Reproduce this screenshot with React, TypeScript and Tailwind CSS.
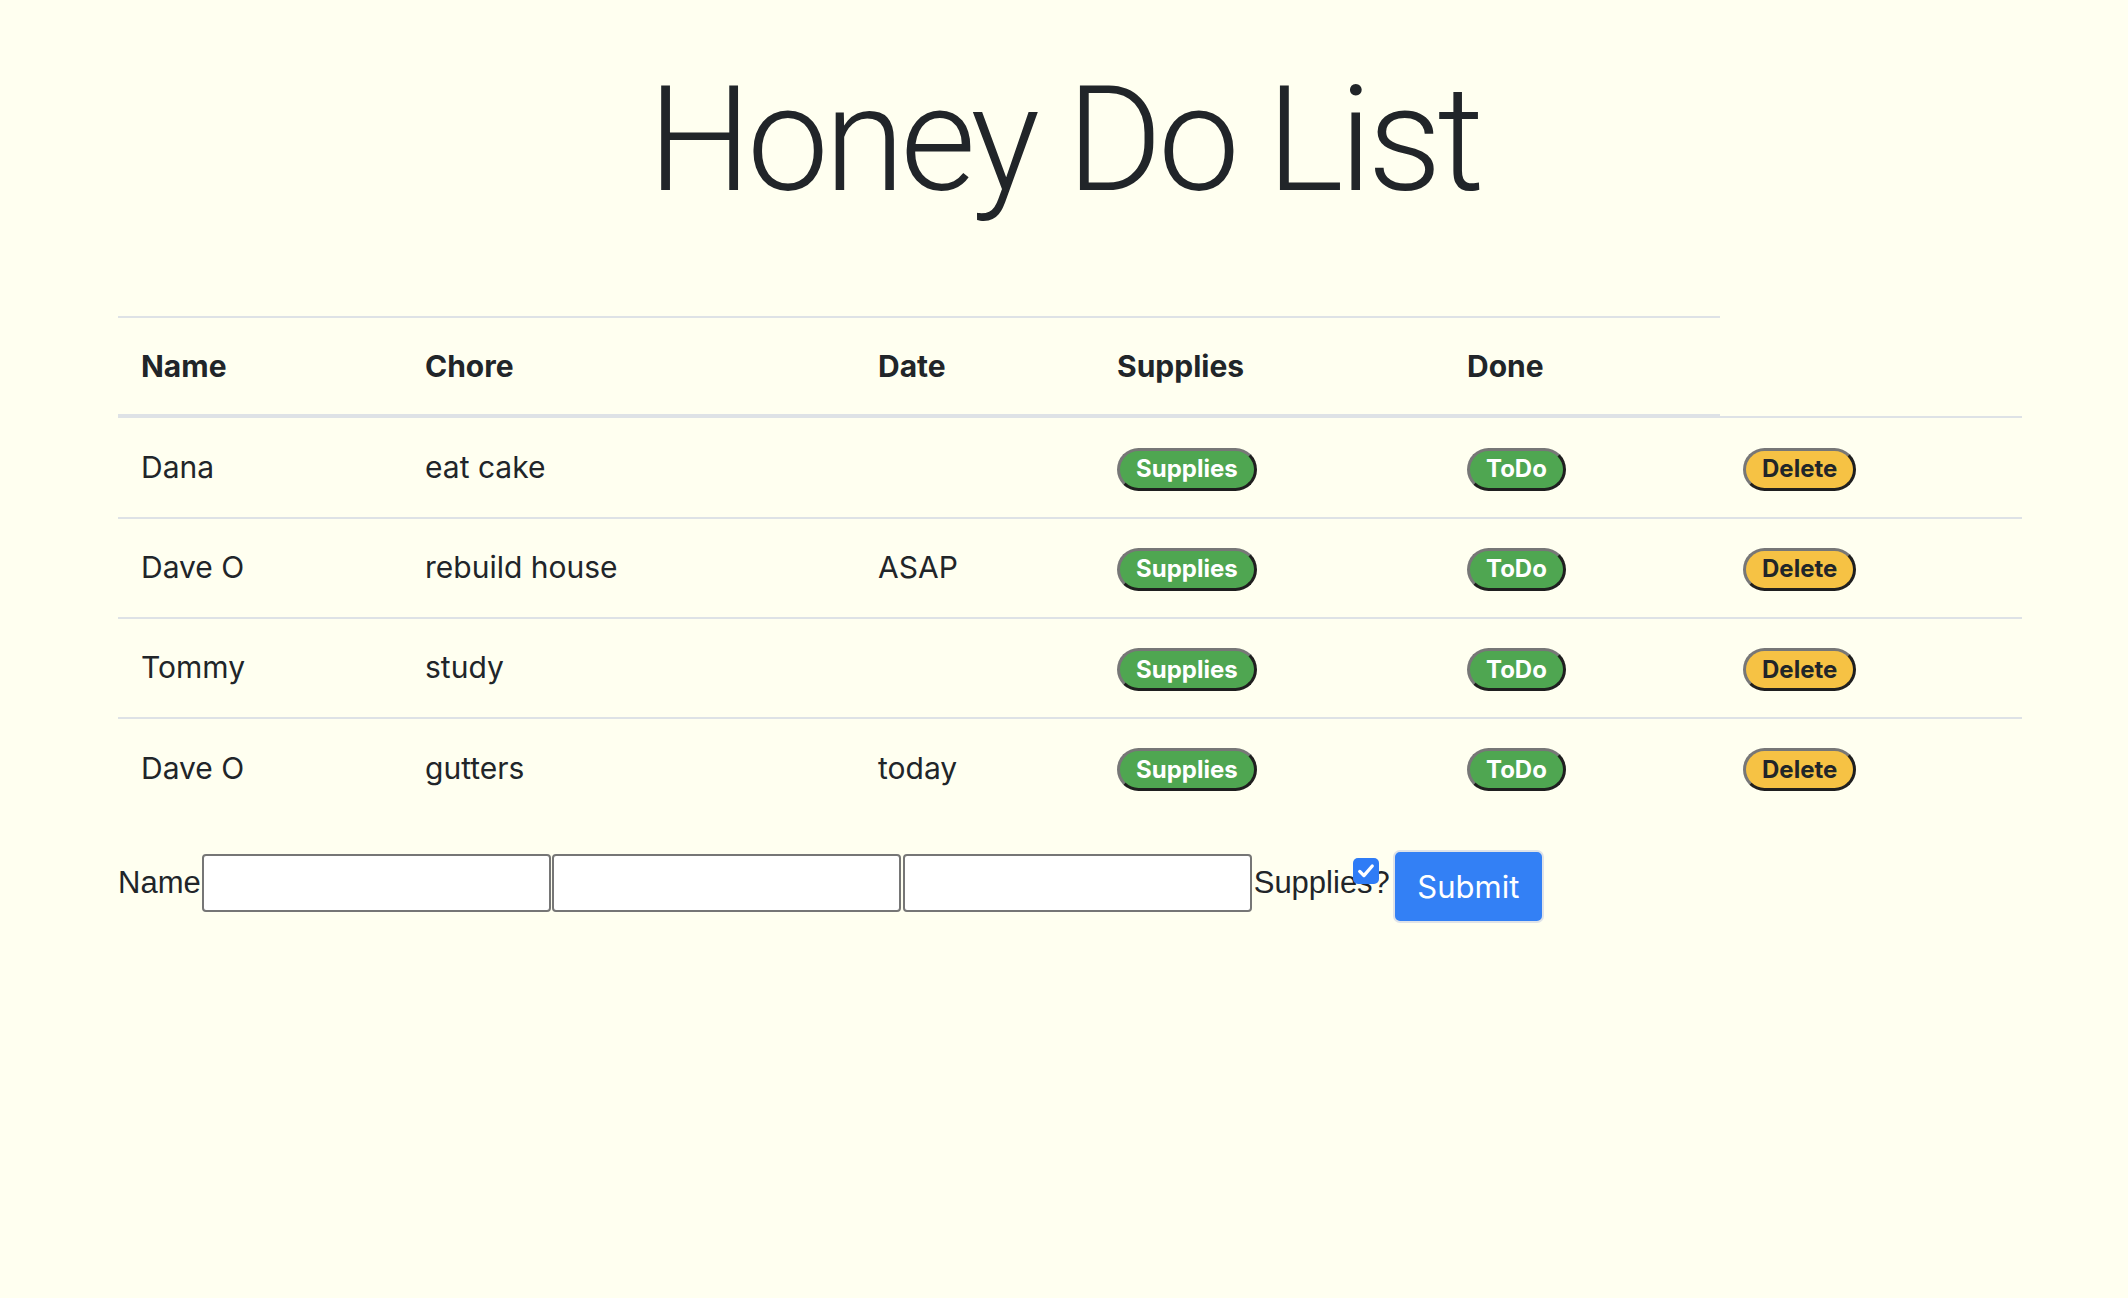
import { useState } from "react";

interface Chore {
  name: string;
  chore: string;
  date: string;
}

const chores: Chore[] = [
  { name: "Dana", chore: "eat cake", date: "" },
  { name: "Dave O", chore: "rebuild house", date: "ASAP" },
  { name: "Tommy", chore: "study", date: "" },
  { name: "Dave O", chore: "gutters", date: "today" },
];

const pill =
  "h-[43px] align-middle rounded-full px-[16px] text-[24px] font-bold leading-none border-[3px] border-t-[#777] border-l-[#777] border-b-[#1f1f1f] border-r-[#1f1f1f]";

const cell = "px-[23px] pt-[26px] pb-[26px] leading-[45px] border-t-2 border-[#dee2e6] align-middle";

export default function App() {
  const [supplies, setSupplies] = useState(true);

  return (
    <div className="min-h-[1298px] bg-[#fffff0] text-[#212529] font-['Inter',sans-serif]">
      <h1 className="pt-[53px] text-center text-[146px] font-light leading-[1.2] tracking-[-0.03em] font-['Roboto',sans-serif]">
        Honey Do List
      </h1>

      <div className="ml-[118px] w-[1904px] mt-[88px]">
        <table className="table-fixed w-full border-separate border-spacing-0 text-[30px]">
          <colgroup>
            <col className="w-[284px]" />
            <col className="w-[453px]" />
            <col className="w-[239px]" />
            <col className="w-[350px]" />
            <col className="w-[276px]" />
            <col className="w-[302px]" />
          </colgroup>
          <thead>
            <tr>
              {["Name", "Chore", "Date", "Supplies", "Done"].map((h) => (
                <th
                  key={h}
                  className="text-left font-bold px-[23px] pt-[26px] pb-[25px] leading-[45px] border-t-2 border-b-2 border-[#dee2e6] align-middle"
                >
                  {h}
                </th>
              ))}
            </tr>
          </thead>
          <tbody>
            {chores.map((c, i) => (
              <tr key={i}>
                <td className={cell}>{c.name}</td>
                <td className={cell}>{c.chore}</td>
                <td className={cell}>{c.date}</td>
                <td className={cell}>
                  <button className={`${pill} bg-[#4fa651] text-white`}>Supplies</button>
                </td>
                <td className={cell}>
                  <button className={`${pill} bg-[#4fa651] text-white`}>ToDo</button>
                </td>
                <td className={cell}>
                  <button className={`${pill} bg-[#f6c244] text-[#212529]`}>Delete</button>
                </td>
              </tr>
            ))}
          </tbody>
        </table>

        {/* Add chore form */}
        <form className="flex items-center mt-[25px] font-['Liberation_Sans',sans-serif] text-[31px]" onSubmit={(e) => e.preventDefault()}>
          <label className="leading-none">Name</label>
          <input className="ml-[1px] w-[349px] h-[58px] bg-white border-2 border-[#767676] rounded-[4px] outline-none" />
          <input className="ml-[1px] w-[349px] h-[58px] bg-white border-2 border-[#767676] rounded-[4px] outline-none" />
          <input className="ml-[2px] w-[349px] h-[58px] bg-white border-2 border-[#767676] rounded-[4px] outline-none" />
          <label className="relative ml-[2px] leading-none">
            Supplies?
            <span
              onClick={() => setSupplies(!supplies)}
              className={`absolute left-[99px] top-[-9px] w-[26px] h-[26px] rounded-[5px] flex items-center justify-center ${supplies ? "bg-[#2f7cf6]" : "bg-white border-2 border-[#767676]"}`}
            >
              {supplies && (
                <svg className="w-[20px] h-[20px]" viewBox="0 0 24 24" fill="none" stroke="white" strokeWidth={4} strokeLinecap="round" strokeLinejoin="round">
                  <path d="M4.5 12.5l5 5L19.5 6" />
                </svg>
              )}
            </span>
          </label>
          <button
            type="submit"
            className="ml-[3px] mt-[8px] w-[151px] h-[73px] rounded-[7px] bg-[#3380f5] border-2 border-[#dfe3e8] text-white text-[31px] font-['Inter',sans-serif]"
          >
            Submit
          </button>
        </form>
      </div>
    </div>
  );
}
